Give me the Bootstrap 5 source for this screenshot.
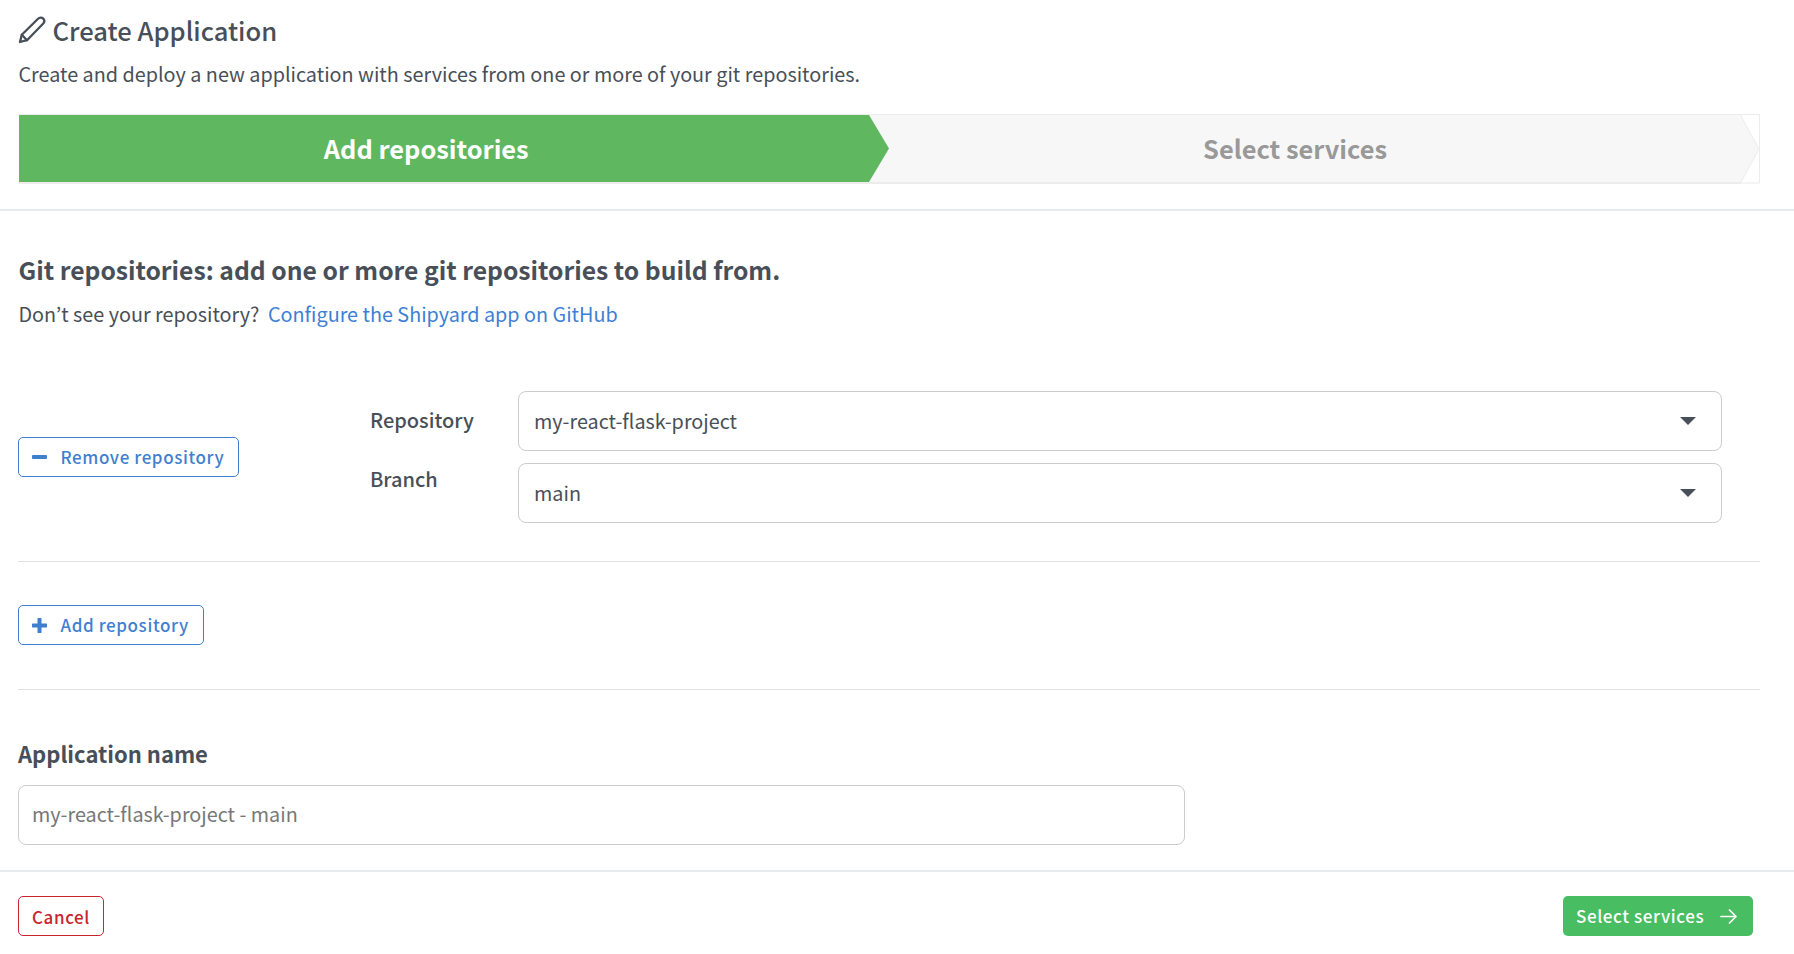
<!DOCTYPE html>
<html lang="en">
<head>
<meta charset="utf-8">
<title>Create Application</title>
<link rel="stylesheet" href="https://cdn.jsdelivr.net/npm/bootstrap@5.3.0/dist/css/bootstrap.min.css">
<style>
html,body{height:954px;overflow:hidden}
body{font-family:"Noto Sans CJK JP","Noto Sans",sans-serif;color:#484f58;background:#fff;font-size:20px;line-height:28px}
.page-head{padding:12px 34px 0 18px;height:211px;border-bottom:2px solid #e9ecef}
.title-row{height:36px;font-size:25.6px;font-weight:500;line-height:36px;gap:6.5px}
.sub-line{margin-top:11px;margin-left:.5px;line-height:30px;font-size:19.8px}
.stepper{margin-top:25px;margin-left:.5px;height:70px;position:relative;background:#f7f7f7;border:1px solid #ececec;border-left:0;border-bottom-width:2px}
.step-on{width:870.500px;height:67px;background:#5fb760;color:#fff;font-weight:700;font-size:25.4px;line-height:67px;text-align:center;padding-right:55px;clip-path:polygon(0 0,850.500px 0,870.500px 50%,850.500px 100%,0 100%)}
.step-off{flex:1;color:#999;font-weight:700;font-size:25.4px;line-height:66px;text-align:center;padding-right:58px}
.tip{position:absolute;right:-1px;top:-1px;width:20px;height:70px}
.body-zone{padding:0 34px 0 18px}
.git-head{font-size:24.7px;font-weight:700;line-height:36px;margin-top:40px;margin-left:.5px}
.hint-line{margin-top:11px;margin-left:.5px;line-height:32px;font-size:19.8px}
.hint-line a{color:#3d7fd4;text-decoration:none;margin-left:4px}
.repo-block{height:232px;padding-top:61px;border-bottom:1px solid #e0e0e0}
.left-side{width:352px;padding-top:46px}
.btn-line{border:1px solid #3f7fd0;color:#3f7fd0;background:#fff;border-radius:5px;height:40px;font-size:17px;font-weight:500;letter-spacing:.6px;padding:0 14px 0 13px;line-height:36px}
.btn-line svg{margin-right:13.500px}
.side-label{width:148px;font-weight:500;font-size:20px;line-height:28px}
.label-one{padding-top:15px}
.label-two{padding-top:2px}
.pick-stack{gap:12px}
.pick-box{width:1204px;height:60px;border:1px solid #ccc;border-radius:8px;background:#fff;padding:0 15px 1px;line-height:58px;font-size:19.8px;color:#484f58}
.caret-mark{width:0;height:0;border-left:8px solid transparent;border-right:8px solid transparent;border-top:8px solid #484f58;margin-right:10px}
.add-block{height:128px;padding-top:43px;border-bottom:1px solid #e0e0e0}
.name-label{font-weight:700;font-size:22px;line-height:32px;margin-top:47px}
.name-input{width:1167px;height:60px;margin-top:16px;border:1px solid #ccc;border-radius:8px;padding:0 13px;line-height:56px;font-size:19.8px;color:#777}
.foot-bar{margin-top:25px;border-top:2px solid #e9ecef;padding:24px 41px 0 18px}
.btn-stop{border:1px solid #c9252b;color:#c9252b;background:#fff;border-radius:5px;height:40px;width:86px;font-size:17px;font-weight:500;letter-spacing:.6px;line-height:37px;padding:0;text-align:center}
.btn-go{background:#48bd62;color:#fff;border:0;border-radius:5px;height:40px;width:190px;font-size:17px;font-weight:500;letter-spacing:.6px;padding:0 0 0 13px;line-height:38px;text-align:left}
.btn-go svg{margin-left:16px}
</style>
</head>
<body>
<header class="page-head">
  <div class="d-flex align-items-center title-row">
    <svg width="28" height="28" viewBox="0 0 28 28" fill="none" stroke="#484f58" stroke-width="2.300" stroke-linejoin="round" stroke-linecap="round"><path d="M2 26l1.800-7.200L19.800 3c1.800-1.800 4-1.800 5.400-.4s1.400 3.600-.4 5.400L9 24.200z"/><path d="M3.800 18.800L9 24.200"/></svg>
    <span>Create Application</span>
  </div>
  <div class="sub-line">Create and deploy a new application with services from one or more of your git repositories.</div>
  <div class="stepper d-flex">
    <div class="step-on">Add repositories</div>
    <div class="step-off">Select services</div>
    <svg class="tip" viewBox="0 0 20 70"><path d="M0 0H20V70H0L19 35Z" fill="#fff"/><path d="M0 0L19 35L0 70" fill="none" stroke="#ececec"/><path d="M0 .5H19.500V69H0" fill="none" stroke="#ececec"/></svg>
  </div>
</header>
<main class="body-zone">
  <div class="git-head">Git repositories: add one or more git repositories to build from.</div>
  <div class="hint-line">Don’t see your repository? <a href="#">Configure the Shipyard app on GitHub</a></div>
  <div class="repo-block d-flex">
    <div class="left-side">
      <button class="btn btn-line d-inline-flex align-items-center" type="button"><svg width="15" height="4" viewBox="0 0 15 4"><rect width="15" height="4" rx="1" fill="#3f7fd0"/></svg>Remove repository</button>
    </div>
    <div class="d-flex flex-column pick-stack">
      <div class="d-flex align-items-start"><div class="side-label label-one">Repository</div><div class="pick-box d-flex justify-content-between align-items-center"><span>my-react-flask-project</span><i class="caret-mark"></i></div></div>
      <div class="d-flex align-items-start"><div class="side-label label-two">Branch</div><div class="pick-box d-flex justify-content-between align-items-center"><span>main</span><i class="caret-mark"></i></div></div>
    </div>
  </div>
  <div class="add-block">
    <button class="btn btn-line d-inline-flex align-items-center" type="button"><svg width="15" height="15" viewBox="0 0 15 15"><path d="M7.500 1v13M1 7.500h13" stroke="#3f7fd0" stroke-width="4" stroke-linecap="round"/></svg>Add repository</button>
  </div>
  <div class="name-label">Application name</div>
  <div class="name-input">my-react-flask-project - main</div>
</main>
<footer class="foot-bar d-flex justify-content-between align-items-start">
  <button class="btn btn-stop" type="button">Cancel</button>
  <button class="btn btn-go d-inline-flex align-items-center" type="button">Select services<svg width="17" height="15" viewBox="0 0 17 15" fill="none" stroke="#fff" stroke-width="1.700" stroke-linecap="round" stroke-linejoin="round"><path d="M1 7.500h15M9.500 1l6.500 6.500L9.500 14"/></svg></button>
</footer>
</body>
</html>
